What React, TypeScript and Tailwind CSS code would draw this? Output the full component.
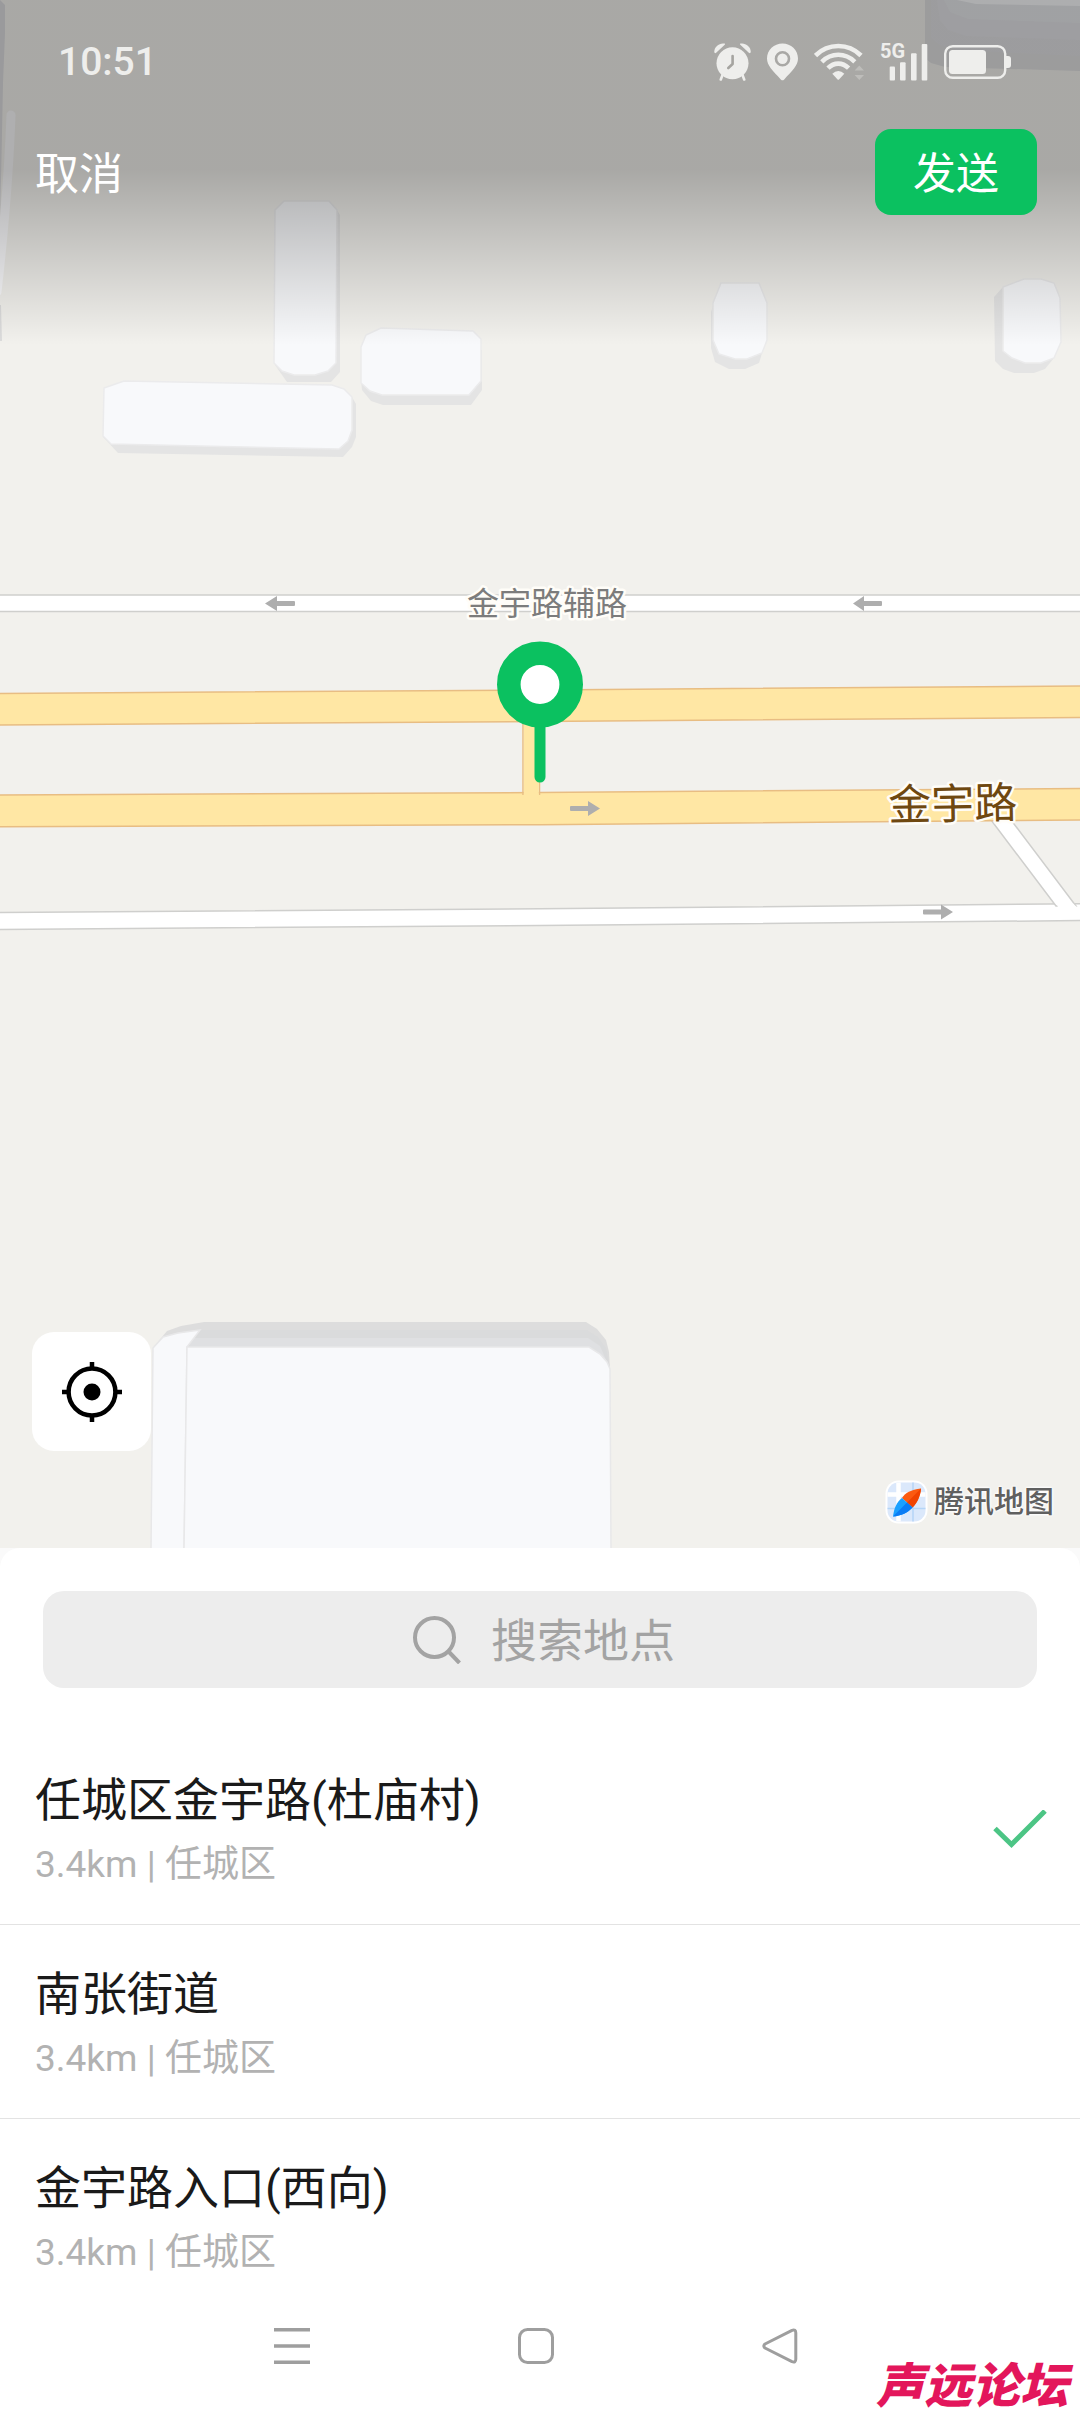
const places = [
  { id: 1, name: '任城区金宇路(杜庙村)', distance: '3.4km', area: '任城区', selected: true },
  { id: 2, name: '南张街道', distance: '3.4km', area: '任城区', selected: false },
  { id: 3, name: '金宇路入口(西向)', distance: '3.4km', area: '任城区', selected: false },
]

function MapCanvas() {
  return (
    <svg
      className="absolute inset-0 h-full w-full"
      viewBox="0 0 1080 1548"
      preserveAspectRatio="xMidYMid slice"
      aria-hidden="true"
    >
      <rect width="1080" height="1548" fill="#f2f1ed" />

      {/* Buildings on the edges */}
      <path d="M0 0L5 5V33L3 83L2 133L1 180L0 232Z" fill="#dcdcdf" />
      <path d="M11 115C9 170 4 230 -3 292" stroke="#fafafc" strokeWidth="9" strokeLinecap="round" fill="none" />
      <path d="M0 305H1L2 341H0Z" fill="#dcdcdc" />
      <path d="M925 0V58L931 63L945 67L1080 71V0Z" fill="#dfdfe0" />
      <path d="M931 0V38L940 45L956 50L1080 56V0Z" fill="#e0e0e3" />
      <path d="M937 0L940 20L948 30L966 36L1080 40V0Z" fill="#e2e2e6" />
      <path d="M944 0L950 12L968 19L1080 23V0Z" fill="#e5e7ea" />
      <path d="M957 0L976 4L1080 6V0Z" fill="#f8f9fb" />

      {/* Building sides */}
      <g fill="#e4e4e4">
        <path d="M337 210L340 215V372L331 382H287L275 365Z" />
        <path d="M352 397L356 404V437L352 447L343 457L118 453L103 437Z" />
        <path d="M482 350V390L471 405H383L371 401L362 390L361 380Z" />
        <path d="M714 303L711 312V348L715 362L729 369H745L759 363L763 350Z" />
        <path d="M1003 287L994 297L995 361L1003 369L1014 373H1034L1045 369L1054 358Z" />
      </g>
      {/* Roofs */}
      <g fill="#f8f9fb" stroke="#ebebec" strokeWidth="1.5">
        <path d="M275 210L284 201H329L337 210L336 363L328 371L315 375H294L282 371L274 363Z" />
        <path d="M104 388L124 381L332 385L344 389L352 397V430L348 441L339 449L111 444L103 436Z" />
        <path d="M361 347L366 335L381 328L473 331L481 339V381L469 395H382L370 391L361 383Z" />
        <path d="M721 283H759L767 303V340L762 353L747 359H735L719 354L713 340V303Z" />
        <path d="M1003 287L1024 279H1041L1054 283L1060 298L1061 342L1054 358L1041 363H1025L1012 358L1003 351Z" />
      </g>

      {/* Large building at the bottom */}
      <path d="M153 1348L167 1331L181 1326L204 1322H586L597 1329L606 1340L609 1352L610 1369V1400H153Z" fill="#dddddd" />
      <path d="M196 1330H587L598 1337L606 1348L610 1369V1400H187Z" fill="#dadbdc" />
      <path d="M190 1338H588L600 1346L610 1369V1400H187Z" fill="#dfe0e2" />
      <path d="M153 1348L163 1337L178 1333L200 1330L187 1347L184 1550H151Z" fill="#f8f9fb" stroke="#e8e8e9" strokeWidth="1.5" />
      <path d="M187 1347H589L600 1354L607 1362L610 1369L611 1550H184Z" fill="#f8f9fb" stroke="#e8e8e9" strokeWidth="1.5" />

      {/* Minor roads */}
      <g fill="#fff" stroke="#cfcfcd" strokeWidth="1.5">
        <path d="M-4 595H1084V611.5H-4Z" />
        <path d="M-4 912.5L540 908.7L1084 903.7V920.5L540 925.5L-4 929.5Z" />
        <path d="M985 812H1005L1076 906H1056Z" />
      </g>
      <path d="M1057 905L1073 903.5L1082 912H1060Z" fill="#fff" />

      {/* Main road */}
      <g fill="#ffe7a4" stroke="#e8bd83" strokeWidth="1.5">
        <path d="M-4 693.5L540 690L1084 686V717.5L540 721.5L-4 725Z" />
        <path d="M-4 795L540 792.5L1084 788.5V820L540 824.7L-4 826.7Z" />
        <path d="M523 720V795M539.5 720V795" />
      </g>
      <path d="M523.8 718H538.8V798H523.8Z" fill="#ffe7a4" />

      {/* One-way arrows */}
      <g fill="#aeaeae">
        <path d="M265 603.5L277 596V601H294Q295 601 295 602V605Q295 606 294 606H277V611Z" />
        <path d="M853 603.5L864 596V601H881Q882 601 882 602V605Q882 606 881 606H864V611Z" />
        <path d="M600 808.5L588 801V806H571Q570 806 570 807V810Q570 811 571 811H588V816Z" />
        <path d="M953 912L941 904.5V909.5H924Q923 909.5 923 910.5V913.5Q923 914.5 924 914.5H941V919.5Z" />
      </g>

      <g
        className="[font-family:'Noto_Sans_CJK_SC',sans-serif]"
        stroke="#fffdf8"
        strokeWidth="5"
        strokeLinejoin="round"
        paintOrder="stroke"
        textAnchor="middle"
      >
        <text x="547" y="615" fontSize="32" fill="#7c7c7c">金宇路辅路</text>
        <text x="953" y="819" fontSize="43" fill="#6f4810" transform="rotate(-1 953 819)">金宇路</text>
      </g>

      {/* Center pin */}
      <path d="M540 720V777" stroke="#0bc160" strokeWidth="11" strokeLinecap="round" />
      <circle cx="540" cy="684.5" r="31.2" fill="#fff" stroke="#0bc160" strokeWidth="23.6" />
    </svg>
  )
}

function StatusBar() {
  return (
    <div className="flex h-[122px] items-center justify-between pt-0.5 pr-[69px] pl-[58px] text-[#eeeeec]">
      <span className="text-[39px] leading-none font-medium">10:51</span>
      <div className="flex items-center gap-4">
        <svg width="37" height="38" viewBox="0 0 37 38" fill="currentColor">
          <path d="M0.3 9.5C-0.3 4 5.5 -0.7 10.8 0.6L11 1.6L1.6 10.2Z" />
          <path d="M36.7 9.5C37.3 4 31.5 -0.7 26.2 0.6L26 1.6L35.4 10.2Z" />
          <path d="M8.5 32L6.8 36.5M28.5 32L30.2 36.5" stroke="currentColor" strokeWidth="2.6" strokeLinecap="round" />
          <circle cx="18.5" cy="20.3" r="16" />
          <path d="M18.6 13V21L14.3 25" stroke="#a5a4a0" strokeWidth="2.6" strokeLinecap="round" strokeLinejoin="round" fill="none" />
        </svg>
        <svg width="31" height="38" viewBox="0 0 31 38" fill="currentColor">
          <path
            fillRule="evenodd"
            d="M15.5 0.5C24 0.5 31 7 31 15.6C31 22.5 25.5 27.5 17 36.7Q15.5 38 14 36.7C5.5 27.5 0 22.5 0 15.6C0 7 7 0.5 15.5 0.5ZM15.5 8A7.8 7.8 0 1 0 15.5 23.6A7.8 7.8 0 1 0 15.5 8Z"
          />
          <circle cx="15.5" cy="15.8" r="5.2" />
        </svg>
        <svg width="50" height="38" viewBox="0 0 50 38" fill="none" stroke="currentColor" strokeWidth="4.6">
          <path d="M1.5 12.5Q11 3 24.3 3Q37.5 3 47 12.5" />
          <path d="M7.8 18.8Q15 11.8 24.3 11.8Q33.5 11.8 40.8 18.8" />
          <path d="M14 25.2Q18.5 20.6 24.3 20.6Q30 20.6 34.6 25.2" />
          <path d="M18.3 30.8Q21 28 24.3 28Q27.6 28 30.3 30.8L25 36.4Q24.3 37 23.6 36.4Z" fill="currentColor" stroke="none" />
          <path d="M45.3 22.5L50 27.5H40.6ZM45.3 37L40.6 32H50Z" fill="currentColor" stroke="none" opacity="0.3" />
        </svg>
        <div className="relative h-[38px] w-12">
          <svg className="h-full w-full" viewBox="0 0 48 38" fill="currentColor">
            <rect x="9.7" y="23.5" width="5.3" height="14" rx="1" />
            <rect x="20" y="19.2" width="5.6" height="18.3" rx="1" />
            <rect x="31" y="10.2" width="5.6" height="27.3" rx="1" />
            <rect x="41.7" y="1" width="5.6" height="36.5" rx="1" />
          </svg>
          <span className="absolute top-0 left-0 text-[20px] leading-4 font-bold">5G</span>
        </div>
        <svg width="67" height="34" viewBox="0 0 67 34" fill="currentColor">
          <rect x="1.2" y="1.2" width="60" height="31.6" rx="7.5" fill="none" stroke="currentColor" strokeWidth="2.4" />
          <rect x="5" y="5" width="37" height="24" rx="3.5" />
          <path d="M62 11H64Q67 11 67 14V20Q67 23 64 23H62Z" />
        </svg>
      </div>
    </div>
  )
}

function TencentMapLogo() {
  return (
    <div className="flex items-center gap-1.5">
      <svg width="43" height="44" viewBox="0 0 43 44" aria-hidden="true">
        <rect x="0.5" y="0.5" width="42" height="43" rx="13" fill="#fff" />
        <clipPath id="tile">
          <rect x="2.5" y="2.5" width="38" height="39" rx="11" />
        </clipPath>
        <g clipPath="url(#tile)">
          <rect x="2" y="2" width="39" height="40" fill="#dbe8fb" />
          <path d="M13.5 0V44M0 14.5H43" stroke="#fff" strokeWidth="4.5" />
          <path d="M28 0V44M0 28.5H43" stroke="#b5d5f7" strokeWidth="1.5" />
        </g>
        <path d="M36 8.5C26 9.5 20 13 17 18L27.5 27.5C32 23 35.5 16 36 8.5Z" fill="#fb5a10" />
        <path d="M22 22.5L27.5 27.5C32 23 35.5 16 36 8.5Z" fill="#f04300" />
        <path d="M8 36.5C9 28 12 21.5 17 18L27.5 27.5C23 32.5 16 36 8 36.5Z" fill="#1aa0ff" />
        <path d="M8 36.5L22 22.5L27.5 27.5C23 32.5 16 36 8 36.5Z" fill="#0a7cf5" />
      </svg>
      <span className="text-[30px] leading-10 font-medium text-[#606060] [text-shadow:0_0_3px_#fff,0_0_3px_#fff,0_0_3px_#fff]">
        腾讯地图
      </span>
    </div>
  )
}

export default function App() {
  return (
    <div className="relative flex min-h-screen flex-col overflow-hidden bg-[#fafafa] [font-family:Roboto,'Noto_Sans_CJK_SC',sans-serif]">
      <section className="relative flex flex-1 flex-col overflow-hidden">
        <MapCanvas />
        <header className="relative bg-[linear-gradient(to_bottom,rgba(0,0,0,0.3)_0px,rgba(0,0,0,0.3)_170px,rgba(0,0,0,0)_345px)] pb-[130px]">
          <StatusBar />
          <div className="flex items-center justify-between pt-[7px] pr-[43px] pl-[35px] text-white">
            <button className="pt-1.5 text-[44px] leading-[54px]">取消</button>
            <button className="h-[86px] w-[162px] rounded-2xl bg-[#0bc160] pt-1 text-[43px] leading-[54px]">发送</button>
          </div>
        </header>
        <div className="relative mt-auto flex items-end justify-between pr-[26px] pb-6 pl-8">
          <button
            aria-label="定位"
            className="mb-[73px] flex size-[119px] items-center justify-center rounded-[22px] bg-white"
          >
            <svg width="60" height="60" viewBox="0 0 60 60" fill="none" stroke="#000" strokeWidth="4.5">
              <circle cx="30" cy="30" r="23.4" />
              <path d="M30 0V6M30 54V60M0 30H6M54 30H60" />
              <circle cx="30" cy="30" r="8.5" fill="#000" stroke="none" />
            </svg>
          </button>
          <TencentMapLogo />
        </div>
      </section>

      <main className="rounded-t-[20px] bg-white pt-[43px]">
        <label className="mx-[43px] flex h-[97px] items-center justify-center gap-[30px] rounded-[21px] bg-[#ededed] pl-2 text-[#a3a3a3]">
          <svg width="48" height="48" viewBox="0 0 48 48" fill="none" stroke="currentColor" strokeWidth="4">
            <circle cx="21.5" cy="21.5" r="19.5" />
            <path d="M36 36L46.5 47" />
          </svg>
          <input
            type="text"
            aria-label="搜索地点"
            placeholder="搜索地点"
            className="h-16 w-[184px] bg-transparent pt-1 text-[46px] outline-none placeholder:text-[#a3a3a3]"
          />
        </label>

        <ul className="pt-[43px]">
          {places.map((place) => (
            <li key={place.id} className="border-b border-[#e3e3e3] pb-[37px] last:border-b-0 last:pb-[5px]">
              <button
                aria-pressed={place.selected}
                className="flex w-full items-center justify-between pt-[42px] pr-[33px] pl-[35px] text-left"
              >
                <span className="flex flex-col gap-4">
                  <span className="text-[46px] leading-[54px] text-[#1a1a1a]">{place.name}</span>
                  <span className="text-[37px] leading-[44px] text-[#b2b2b2]">
                    {place.distance} | {place.area}
                  </span>
                </span>
                {place.selected && (
                  <svg width="54" height="40" viewBox="0 0 54 40" fill="none" stroke="#4cc585" strokeWidth="5">
                    <path d="M2 18.5L18.5 34.5L52 1" />
                  </svg>
                )}
              </button>
            </li>
          ))}
        </ul>

        <nav className="flex h-[132px] items-center justify-center gap-52 pr-2 text-[#9e9e9e]">
          <button aria-label="菜单">
            <svg width="36" height="36" viewBox="0 0 36 36" stroke="currentColor" strokeWidth="3.4">
              <path d="M0 1.8H36M0 18H36M0 34.2H36" />
            </svg>
          </button>
          <button aria-label="主页">
            <svg width="36" height="36" viewBox="0 0 36 36" fill="none" stroke="currentColor" strokeWidth="3">
              <rect x="1.5" y="1.5" width="33" height="33" rx="8" />
            </svg>
          </button>
          <button aria-label="返回">
            <svg width="36" height="36" viewBox="0 0 36 36" fill="none" stroke="currentColor" strokeWidth="3">
              <path d="M30 2.3Q33.8 1 33.8 5V31Q33.8 35 30 33.7L3 20Q0.5 18 3 16Z" strokeLinejoin="round" />
            </svg>
          </button>
        </nav>
      </main>

      <span className="absolute right-0 bottom-0 pr-3 text-[48px] leading-[50px] font-black text-[#e3165b] italic">
        声远论坛
      </span>
    </div>
  )
}
